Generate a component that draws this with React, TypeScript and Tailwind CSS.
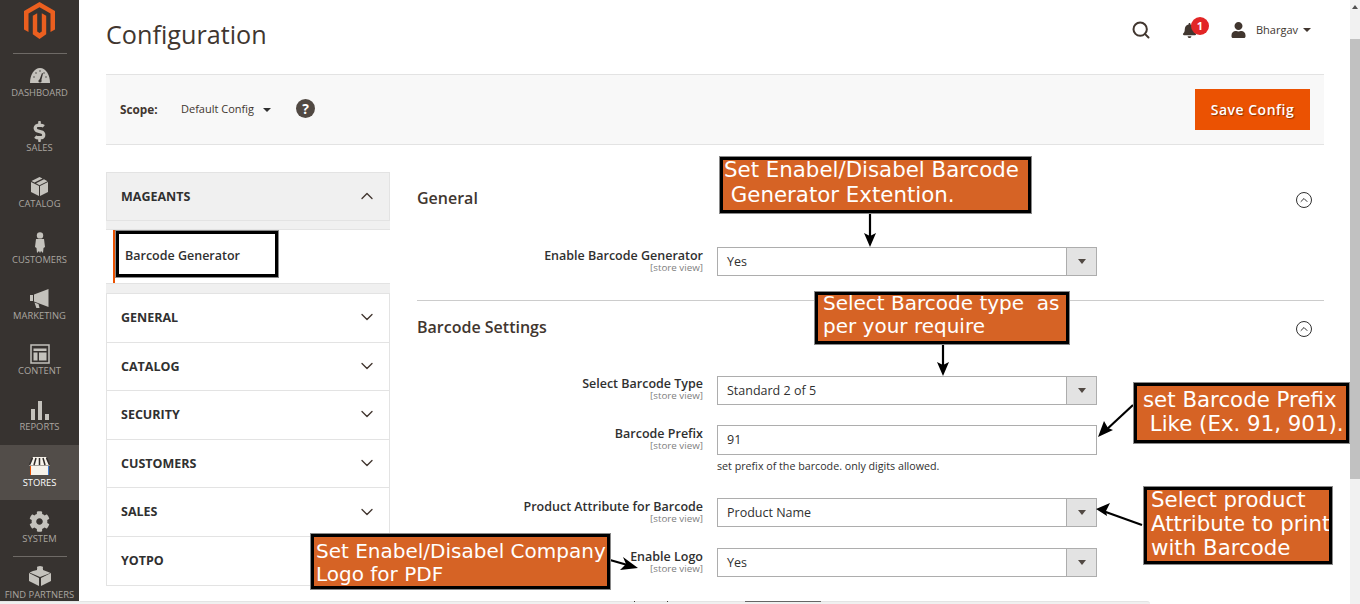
import React from 'react';
import {ChevronDown, ChevronUp, Search} from 'lucide-react';
import {FaBell, FaCog, FaDollarSign, FaUser} from 'react-icons/fa';

const navItems = [
    {label: 'Dashboard', icon: <DashboardIcon/>},
    {label: 'Sales', icon: <FaDollarSign className="w-[21px] h-[21px]"/>},
    {label: 'Catalog', icon: <CatalogIcon/>},
    {label: 'Customers', icon: <CustomersIcon/>},
    {label: 'Marketing', icon: <MarketingIcon/>},
    {label: 'Content', icon: <ContentIcon/>},
    {label: 'Reports', icon: <ReportsIcon/>},
    {label: 'Stores', icon: <StoresIcon/>, active: true},
    {label: 'System', icon: <FaCog className="w-[21px] h-[21px]"/>},
];

function DashboardIcon() {
    return (
        <svg width="20" height="15" viewBox="0 0 20 15" fill="currentColor">
            <path d="M0 15C0 7 4 0 10 0s10 7 10 15z"/>
            <path d="M9 13l3-8 1 .5-2 8z" fill="#373330"/>
            <circle cx="10" cy="13" r="1.6" fill="#373330"/>
            <g fill="#373330">
                <circle cx="4" cy="9" r=".7"/><circle cx="6" cy="5" r=".7"/><circle cx="10" cy="3" r=".7"/>
                <circle cx="14" cy="5" r=".7"/><circle cx="16" cy="9" r=".7"/>
            </g>
        </svg>
    );
}

function CatalogIcon() {
    return (
        <svg width="17" height="19" viewBox="0 0 17 19" fill="currentColor">
            <path d="M0 5l8 4v10l-8-4z"/>
            <path d="M17 5l-8 4v10l8-4z"/>
            <path d="M8.5 0l3 1.500-8 4-3-1.500zM5 6.200l8-4 3.500 2-8 4z"/>
        </svg>
    );
}

function CustomersIcon() {
    return (
        <svg width="10" height="22" viewBox="0 0 10 22" fill="currentColor">
            <circle cx="5" cy="3.400" r="3.200"/>
            <path d="M1 7h8l1 8-1.500 1-.5 5-2-2-1 2-1-2-2 2-.5-5L0 15z"/>
        </svg>
    );
}

function MarketingIcon() {
    return (
        <svg width="19" height="19" viewBox="0 0 19 19" fill="currentColor">
            <path d="M0 6h3v6H0zM4 5.500L18.500 0v18L4 12.500z"/>
            <path d="M4.500 13.500l4 1.500 1 4-3 .5z"/>
        </svg>
    );
}

function ContentIcon() {
    return (
        <svg width="20" height="20" viewBox="0 0 20 20" fill="none" stroke="currentColor">
            <rect x="1" y="1" width="18" height="18" strokeWidth="1.500"/>
            <path d="M3.500 4.500h13v2.500h-13zM3.500 8.500h4v8h-4zM9 8.500h7.500v8H9z" fill="currentColor" stroke="none"/>
        </svg>
    );
}

function ReportsIcon() {
    return (
        <svg width="18" height="19" viewBox="0 0 18 19" fill="currentColor">
            <path d="M0 8h4v11H0zM7 0h4v19H7zM14 13h4v6h-4z"/>
        </svg>
    );
}

function StoresIcon() {
    return (
        <svg width="21" height="18" viewBox="0 0 21 18">
            <path d="M2 9h17v9H2z" fill="#f7f3eb"/>
            <path d="M4 0h13l4 8.500H0z" fill="#f7f3eb"/>
            <path d="M3.500 1l-3 7M7 1L5 8M10.500 1v7M14 1l2 7M17.500 1l3 7" stroke="#2f2b29" strokeWidth="1.500"/>
            <path d="M1.500 9v9" stroke="#eb5202" strokeWidth="1"/>
            <path d="M19.500 9v9" stroke="#3a7bd5" strokeWidth="1"/>
        </svg>
    );
}

function PartnersIcon() {
    return (
        <svg width="22" height="21" viewBox="0 0 22 21" fill="currentColor">
            <path d="M0 8l10 5v8L0 16zM22 8l-10 5v8l10-5z"/>
            <path d="M11 2l3 1.500v1.500l4 1.500 3.500 1.500L11 12 .5 7.500 4 6l4-1V3.500z"/>
            <ellipse cx="11" cy="2.500" rx="3" ry="1.500"/>
        </svg>
    );
}

function MagentoLogo() {
    return (
        <svg width="31" height="37" viewBox="0 0 31 37" fill="#eb5f1f">
            <path d="M15.500 0L31 9v18.500l-4.500 2.600V11.500L15.500 5.200 4.500 11.500v18.600L0 27.500V9z"/>
            <path d="M13.200 11.200l-4.400 2.600v18.400l6.700 4.800 6.700-4.800V13.800l-4.400-2.600v18.300l-2.300 1.500-2.300-1.500z"/>
        </svg>
    );
}

function Sidebar() {
    return (
        <div className="w-[79px] shrink-0 h-[601px] bg-[#373330] text-[#aaa6a0] flex flex-col overflow-hidden">
            <div className="h-[54px] shrink-0 flex flex-col items-center">
                <div className="mt-[2px] h-[51.5px]"><MagentoLogo/></div>
                <div className="w-[54px] border-t border-[#6e6a66]"/>
            </div>
            {navItems.map((item) => {
                return (
                    <div
                        key={item.label}
                        className={`h-[55.8px] shrink-0 flex flex-col items-center ${item.active ? 'bg-[#524d49] text-white' : ''}`}
                    >
                        <div className={`h-[20.500px] mt-[11px] flex items-center justify-center ${item.active ? '' : 'text-[#c4c2bc]'}`}>{item.icon}</div>
                        <p className="text-[9.400px] leading-[14px] uppercase">{item.label}</p>
                    </div>
                );
            })}
            <div className="shrink-0 flex flex-col items-center">
                <div className="w-[54px] border-t border-[#6e6a66]"/>
                <div className="h-[20px] mt-[8px] flex items-center justify-center text-[#c4c2bc]"><PartnersIcon/></div>
                <p className="text-[9.400px] leading-[14px] mt-[2.500px] uppercase whitespace-nowrap">Find Partners</p>
            </div>
        </div>
    );
}

function Header() {
    return (
        <div className="h-[74px] flex items-start justify-between">
            <h1 className="text-[25.200px] leading-[36px] mt-[16px] text-[#41362f]">Configuration</h1>
            <div className="flex items-center mt-[20px] mr-[13px] text-[#41362f]">
                <Search className="w-[20px] h-[20px]" strokeWidth={2.400}/>
                <div className="relative ml-[31px] w-[39px]">
                    <FaBell className="w-[15px] h-[15px]"/>
                    <span className="absolute left-[9px] top-[-6px] w-[18px] h-[18px] rounded-full bg-[#e22626] text-white text-[11px] leading-[18px] font-bold text-center">1</span>
                </div>
                <FaUser className="w-[17px] h-[16px] ml-[9px]"/>
                <span className="ml-[9px] text-[11px] leading-[16px]">Bhargav</span>
                <span className="ml-[5px] border-x-[4px] border-x-transparent border-t-[4px] border-t-[#41362f]"/>
            </div>
        </div>
    );
}

function ScopeBar() {
    return (
        <div className="h-[71px] bg-[#f8f8f8] border-y border-[#e3e3e3] flex items-center justify-between pl-[14px] pr-[14px]">
            <div className="flex items-center text-[#41362f]">
                <span className="text-[11.800px] font-bold w-[61px]">Scope:</span>
                <span className="text-[11px]">Default Config</span>
                <span className="ml-[9px] border-x-[4px] border-x-transparent border-t-[4px] border-t-[#303030]"/>
                <span className="ml-[25px] mb-[2px] w-[19px] h-[19px] rounded-full bg-[#514943] text-white text-[14px] leading-[19px] font-bold text-center">?</span>
            </div>
            <button className="w-[115px] h-[41px] bg-[#eb5202] text-white text-[14px] font-semibold tracking-[0.5px] [text-shadow:1px_1px_1px_rgba(0,0,0,0.4)]">Save Config</button>
        </div>
    );
}

const tabSections = ['General', 'Catalog', 'Security', 'Customers', 'Sales', 'Yotpo'];

function TabsColumn() {
    return (
        <div className="w-[284px] shrink-0 mr-[27px] text-[#303030] mt-[27px]">
            <div className="h-[49px] pt-[1px] bg-[#f0f0f0] border border-[#e3e3e3] flex items-center justify-between pl-[14px] pr-[12px]">
                <span className="text-[12.500px] font-bold uppercase">Mageants</span>
                <ChevronUp className="w-[20px] h-[20px] -translate-y-px text-[#41362f]" strokeWidth={1.600}/>
            </div>
            <div className="h-[9px] bg-[#f0f0f0] border-b border-[#e3e3e3]"/>
            <div className="h-[53px] ml-[7px] border-l-[2px] border-[#eb5202] flex items-center pl-[10px]">
                <span className="text-[12.500px] font-semibold">Barcode Generator</span>
            </div>
            <div className="h-[11px] bg-[#f0f0f0] border-y border-[#e3e3e3]"/>
            {tabSections.map((section) => {
                return (
                    <div key={section} className="h-[48.600px] pt-[1px] border-x border-b border-[#e3e3e3] flex items-center justify-between pl-[14px] pr-[12px]">
                        <span className="text-[12.500px] font-bold uppercase">{section}</span>
                        <ChevronDown className="w-[20px] h-[20px] -translate-y-px text-[#41362f]" strokeWidth={1.600}/>
                    </div>
                );
            })}
        </div>
    );
}

interface FieldProps {
    label: string;
    value: string;
    input?: boolean;
    tight?: boolean;
    className: string;
    note?: string;
}

function Field(props: FieldProps) {
    const {label, value, input, tight, className, note} = props;
    return (
        <div className={`flex items-start ${className}`}>
            <div className={`w-[286px] shrink-0 text-right mr-[14px] ${tight ? '' : 'pt-[1px]'}`}>
                <p className="text-[12.500px] leading-[15px] font-semibold text-[#303030]">{label}</p>
                <p className="text-[9.800px] leading-[10px] text-[#808080]">[store view]</p>
            </div>
            <div className="w-[380px]">
                <div className={`flex items-center ${input ? 'h-[30px]' : 'h-[29px]'} border border-[#adadad] bg-white`}>
                    <span className={`flex-1 pl-[9px] text-[12.500px] text-[#303030] ${input ? '' : 'translate-y-px'}`}>{value}</span>
                    {!input && (
                        <span className="w-[30px] h-full bg-[#e3e3e3] border-l border-[#adadad] flex items-center justify-center">
                            <span className="border-x-[4px] border-x-transparent border-t-[5px] border-t-[#514943]"/>
                        </span>
                    )}
                </div>
                {note && <p className="text-[10.700px] leading-[14px] mt-[4px] text-[#303030]">{note}</p>}
            </div>
        </div>
    );
}

function SectionTitle(props: {title: string; className: string}) {
    return (
        <div className={`flex items-center justify-between pr-[12px] ${props.className}`}>
            <h2 className="text-[16px] leading-[22px] font-semibold text-[#41362f]">{props.title}</h2>
            <span className="w-[16px] h-[16px] mt-[3px] rounded-full border border-[#303030] flex items-center justify-center">
                <ChevronUp className="w-[12px] h-[12px] text-[#303030]" strokeWidth={2}/>
            </span>
        </div>
    );
}

function FormColumn() {
    return (
        <div className="flex-1 pt-[42px]">
            <SectionTitle title="General" className="h-[22px]"/>
            <Field label="Enable Barcode Generator" value="Yes" className="mt-[38px]"/>
            <div className="border-t border-[#cccccc] mt-[24px]"/>
            <SectionTitle title="Barcode Settings" className="mt-[15px] h-[22px]"/>
            <Field label="Select Barcode Type" value="Standard 2 of 5" tight className="mt-[38px]"/>
            <Field
                label="Barcode Prefix"
                value="91"
                input
                note="set prefix of the barcode. only digits allowed."
                className="mt-[20px]"
            />
            <Field label="Product Attribute for Barcode" value="Product Name" className="mt-[25px]"/>
            <Field label="Enable Logo" value="Yes" className="mt-[21px]"/>
        </div>
    );
}

interface NoteBoxProps {
    text: string;
    className: string;
    textClassName: string;
}

function NoteBox(props: NoteBoxProps) {
    return (
        <div className={`absolute bg-[#d66325] border-[3px] border-black outline outline-1 outline-[#8a8a8a] overflow-hidden text-white whitespace-pre font-['DejaVu_Sans',sans-serif] ${props.className}`}>
            <p className={props.textClassName}>{props.text}</p>
        </div>
    );
}

function Arrows() {
    const arrows = [
        {line: '870,213 870,240', head: '864,233 870,247 876,233 870,236'},
        {line: '943,344 943,369', head: '937,362 943,376 949,362 943,365'},
        {line: '1133,405 1105,431', head: '1104,421 1098,437 1113,430 1108,428'},
        {line: '1142,525 1103,511', head: '1110,503 1096,509 1107,516 1106,511'},
        {line: '610,560 631,566', head: '623,557 638,568 620,570 626,564'},
    ];
    return (
        <svg className="absolute left-0 top-0 pointer-events-none" width="1360" height="604" viewBox="0 0 1360 604">
            {arrows.map((arrow) => {
                return (
                    <g key={arrow.line}>
                        <polyline points={arrow.line} stroke="black" strokeWidth="2.200" fill="none"/>
                        <polygon points={arrow.head} fill="black"/>
                    </g>
                );
            })}
        </svg>
    );
}

export default function App() {
    return (
        <div className="relative w-[1360px] h-[604px] overflow-hidden bg-white font-['Open_Sans',sans-serif]">
            <div className="flex h-full">
                <Sidebar/>
                <div className="w-[1271px] shrink-0 pl-[27px] pr-[26px] overflow-hidden">
                    <Header/>
                    <ScopeBar/>
                    <div className="flex h-[460px] overflow-hidden">
                        <TabsColumn/>
                        <FormColumn/>
                    </div>
                </div>
                <div className="w-[10px] shrink-0 bg-[#f1f1f1] flex flex-col">
                    <div className="h-[13px] flex items-center justify-center">
                        <span className="border-x-[3px] border-x-transparent border-b-[4px] border-b-[#505050]"/>
                    </div>
                    <div className="mt-[26px] h-[440px] bg-[#c1c1c1]"/>
                </div>
            </div>

            {/* Bottom scrollbar and the edge of the next field */}
            <div className="absolute left-0 bottom-0 w-[1350px] h-[3px] bg-white"/>
            <div className="absolute left-0 bottom-0 w-[1150px] h-[3px] bg-[#f0f0f0] border-t border-[#e4e4e4] rounded-tr-[4px]"/>
            <div className="absolute left-[745px] bottom-[2px] w-[76px] h-[1px] bg-[#666666]"/>
            <div className="absolute left-[634px] bottom-[2px] w-[1px] h-[1px] bg-[#41362f]"/>
            <div className="absolute left-[667px] bottom-[2px] w-[1px] h-[1px] bg-[#41362f]"/>

            {/* Callouts drawn over the screenshot */}
            <div className="absolute left-[116px] top-[231px] w-[162px] h-[46px] border-[3px] border-black outline outline-1 outline-[#8a8a8a]"/>
            <Arrows/>
            <NoteBox
                text={'Set Enabel/Disabel Barcode\n Generator Extention.'}
                className="left-[720px] top-[157px] w-[311px] h-[56px] pl-[1px]"
                textClassName="text-[21.330px] leading-[25px] -mt-[3px]"
            />
            <NoteBox
                text={'Select Barcode type  as\nper your require'}
                className="left-[815px] top-[292px] w-[254px] h-[52px] pl-[5px]"
                textClassName="text-[20px] leading-[23px] -mt-[3px]"
            />
            <NoteBox
                text={'set Barcode Prefix\n Like (Ex. 91, 901).'}
                className="left-[1134px] top-[383px] w-[215px] h-[60px] pl-[6px]"
                textClassName="text-[21.330px] leading-[24px] mt-[2px]"
            />
            <NoteBox
                text={'Select product\nAttribute to print\nwith Barcode'}
                className="left-[1144px] top-[487px] w-[188px] h-[77px] pl-[4px]"
                textClassName="text-[21.330px] leading-[24px] -mt-[2px]"
            />
            <NoteBox
                text={'Set Enabel/Disabel Company\nLogo for PDF'}
                className="left-[311px] top-[534px] w-[299px] h-[55px] pl-[2px]"
                textClassName="text-[20px] leading-[23px] mt-[3px]"
            />
        </div>
    );
}
